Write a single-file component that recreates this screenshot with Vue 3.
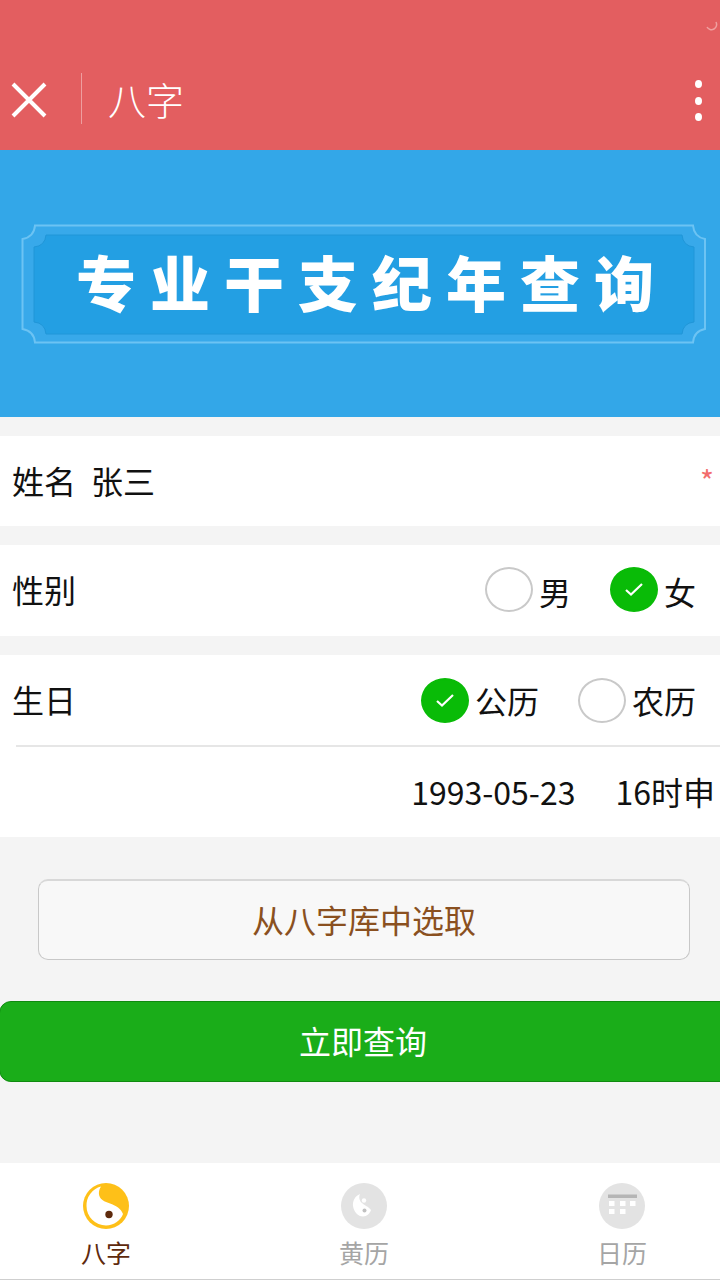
<template>
  <div class="page">
    <header class="topbar">
      <svg class="status-mark" width="14" height="10" viewBox="0 0 14 10">
        <path d="M12 1 A5 5 0 0 1 3 6" fill="none" stroke="#f0a0a0" stroke-width="1.5" />
      </svg>
      <button class="close" aria-label="关闭">
        <svg width="36" height="36" viewBox="0 0 36 36">
          <path d="M2 2 L34 34 M34 2 L2 34" stroke="#fff" stroke-width="4" />
        </svg>
      </button>
      <span class="divider"></span>
      <span class="title">八字</span>
      <span class="more"><i></i><i></i><i></i></span>
    </header>

    <section class="banner">
      <svg class="plaque" width="720" height="267" viewBox="0 150 720 267">
        <path
          d="M35 225.500 H693 Q694 237 705 239 V329 Q694 331 693 342.500 H35 Q34 331 22.500 329 V239 Q34 237 35 225.500 Z"
          fill="#38a9ea"
          stroke="#6cc3f3"
          stroke-width="2"
        />
        <path
          d="M46 235 H682 Q683 246 694 247 V322 Q683 323 682 334 H46 Q45 323 34 322 V247 Q45 246 46 235 Z"
          fill="#239fe3"
          stroke="#2096d8"
          stroke-width="1"
        />
      </svg>
      <h1 class="banner-title">专业干支纪年查询</h1>
    </section>

    <div class="row name-row">
      <span class="label">姓名</span>
      <span class="name-value">张三</span>
      <span class="required">*</span>
    </div>

    <div class="row">
      <span class="label">性别</span>
      <div class="options gender">
        <label v-for="g in genders" :key="g.text" class="option">
          <span class="radio" :class="{ on: g.on }">
            <svg v-if="g.on" width="20" height="16" viewBox="0 0 20 16">
              <path d="M2 9 L7 13.500 L18 3" fill="none" stroke="#fff" stroke-width="2.200" />
            </svg>
          </span>
          <span>{{ g.text }}</span>
        </label>
      </div>
    </div>

    <div class="birthday">
      <div class="row">
        <span class="label">生日</span>
        <div class="options calendar">
          <label v-for="c in calendars" :key="c.text" class="option">
            <span class="radio" :class="{ on: c.on }">
              <svg v-if="c.on" width="20" height="16" viewBox="0 0 20 16">
                <path d="M2 9 L7 13.500 L18 3" fill="none" stroke="#fff" stroke-width="2.200" />
              </svg>
            </span>
            <span>{{ c.text }}</span>
          </label>
        </div>
      </div>
      <div class="date-row">
        <span>1993-05-23</span>
        <span>16时申</span>
      </div>
    </div>

    <button class="pick">从八字库中选取</button>
    <button class="submit">立即查询</button>

    <nav class="tabs">
      <a class="tab active">
        <svg width="46" height="46" viewBox="0 0 46 46">
          <circle cx="23" cy="23" r="23" fill="#fec018" />
          <path
            d="M18 3.500 C15 8 15 14 19.500 17 C24 20.500 30 20.500 35 24.500 C37.500 26.500 39 28.500 40 31 C38 37 31 42.500 23 42.500 A19.500 19.500 0 0 1 3.500 23 A19.500 19.500 0 0 1 18 3.500 Z"
            fill="#fff"
          />
          <circle cx="26" cy="31.500" r="3.700" fill="#5e2a0c" />
        </svg>
        <span>八字</span>
      </a>
      <a class="tab">
        <svg width="46" height="46" viewBox="0 0 46 46">
          <circle cx="23" cy="23" r="23" fill="#e3e3e3" />
          <path
            d="M19 11 C14 13 11.500 18 12 23 C13 29 17 33.500 22 33.500 C26 33.500 29 30 30 27 C27 23 24 23 21 20 C18.500 18 17.500 14 19 11 Z"
            fill="#fff"
          />
          <circle cx="23" cy="17.500" r="2.200" fill="#fff" />
          <circle cx="23.500" cy="27.500" r="2" fill="#c0c0c0" />
        </svg>
        <span>黄历</span>
      </a>
      <a class="tab">
        <svg width="46" height="46" viewBox="0 0 46 46">
          <circle cx="23" cy="23" r="23" fill="#e3e3e3" />
          <rect x="9" y="11.500" width="29" height="3.500" fill="#b5b5b5" />
          <g fill="#fff">
            <rect x="10" y="18" width="5.500" height="5" />
            <rect x="21" y="18" width="5.500" height="5" />
            <rect x="31" y="18" width="5.500" height="5" />
            <rect x="10" y="26" width="5.500" height="5" />
            <rect x="21" y="26" width="5.500" height="5" />
          </g>
        </svg>
        <span>日历</span>
      </a>
    </nav>
  </div>
</template>

<script setup>
const genders = [
  { text: "男", on: false },
  { text: "女", on: true },
];

const calendars = [
  { text: "公历", on: true },
  { text: "农历", on: false },
];
</script>

<style>
html,
body {
  margin: 0;
  background: #f4f4f4;
}
</style>

<style scoped>
.page {
  width: 720px;
  height: 1280px;
  overflow: hidden;
  display: flex;
  flex-direction: column;
  background: #f4f4f4;
  font-family: "Noto Sans CJK SC", "Noto Sans", sans-serif;
  color: #111;
}

.topbar {
  position: relative;
  flex: none;
  height: 150px;
  box-sizing: border-box;
  padding-top: 73px;
  display: flex;
  align-items: flex-start;
  background: #e35e60;
  color: #fff;
}

.status-mark {
  position: absolute;
  top: 21px;
  right: 2px;
}

.close {
  width: 36px;
  height: 36px;
  margin: 9px 0 0 11px;
  padding: 0;
  border: 0;
  background: none;
  line-height: 0;
}

.divider {
  width: 1px;
  height: 51px;
  margin-left: 34px;
  background: rgba(255, 255, 255, 0.4);
}

.title {
  margin-left: 26px;
  font-size: 38px;
  line-height: 52px;
  font-weight: 300;
}

.more {
  margin: 7px 18px 0 auto;
  display: flex;
  flex-direction: column;
  gap: 8.500px;
}

.more i {
  width: 7px;
  height: 8px;
  border-radius: 50%;
  background: #fff;
}

.banner {
  position: relative;
  flex: none;
  height: 267px;
  background: #33a7e8;
}

.plaque {
  display: block;
}

.banner-title {
  position: absolute;
  left: 76px;
  top: 91px;
  margin: 0;
  font-size: 60px;
  line-height: 80px;
  font-weight: 900;
  letter-spacing: 14px;
  color: #fff;
  white-space: nowrap;
}

.row {
  height: 90px;
  display: flex;
  align-items: center;
  padding-left: 12px;
  background: #fff;
  font-size: 32px;
}

.name-row {
  margin-top: 19px;
  position: relative;
}

.label {
  flex: none;
  margin-top: -3px;
}

.name-value {
  margin: -3px 0 0 15px;
}

.required {
  position: absolute;
  right: 6px;
  top: 24px;
  color: #f26d6d;
  font-size: 30px;
  line-height: 40px;
}

.name-row + .row {
  margin-top: 19px;
  height: 91px;
}

.options {
  margin-left: auto;
  display: flex;
  padding-right: 24px;
  gap: 39px;
}

.option {
  display: flex;
  align-items: center;
  gap: 6px;
}

.radio {
  box-sizing: border-box;
  width: 48px;
  height: 45px;
  display: flex;
  align-items: center;
  justify-content: center;
  border: 2px solid #c9c9c9;
  border-radius: 50%;
  background: #fff;
}

.radio.on {
  border-color: #09bb07;
  background: #09bb07;
}

.gender .radio {
  margin-top: -3px;
}

.birthday {
  margin-top: 19px;
  background: #fff;
}

.date-row {
  margin-left: 16px;
  height: 88px;
  display: flex;
  align-items: center;
  justify-content: flex-end;
  gap: 40px;
  padding: 0 5px 2px 0;
  border-top: 2px solid #e6e6e6;
  font-size: 32px;
}

.pick {
  flex: none;
  box-sizing: border-box;
  width: 652px;
  height: 81px;
  margin: 42px 0 0 38px;
  padding-bottom: 4px;
  border: 1px solid #c8c8c8;
  border-top: 2px solid #d8d8d8;
  border-radius: 10px;
  background: #f8f8f8;
  color: #8a5020;
  font-family: inherit;
  font-size: 32px;
}

.submit {
  flex: none;
  box-sizing: border-box;
  width: 740px;
  height: 81px;
  margin: 41px 0 0 -1px;
  padding: 0 18px 4px 6px;
  border: 1.500px solid #0f8a0f;
  border-radius: 12px;
  background: #1aad19;
  color: #fff;
  font-family: inherit;
  font-size: 32px;
}

.tabs {
  flex: none;
  box-sizing: border-box;
  height: 117px;
  margin-top: auto;
  padding: 20px 0 0 69px;
  display: flex;
  gap: 184px;
  background: #fff;
  border-bottom: 1px solid #cfcfcf;
}

.tab {
  width: 74px;
  display: flex;
  flex-direction: column;
  align-items: center;
  gap: 6px;
  font-size: 25px;
  line-height: 34px;
  color: #a5a5a5;
}

.tab.active {
  color: #5e2a0c;
}
</style>
